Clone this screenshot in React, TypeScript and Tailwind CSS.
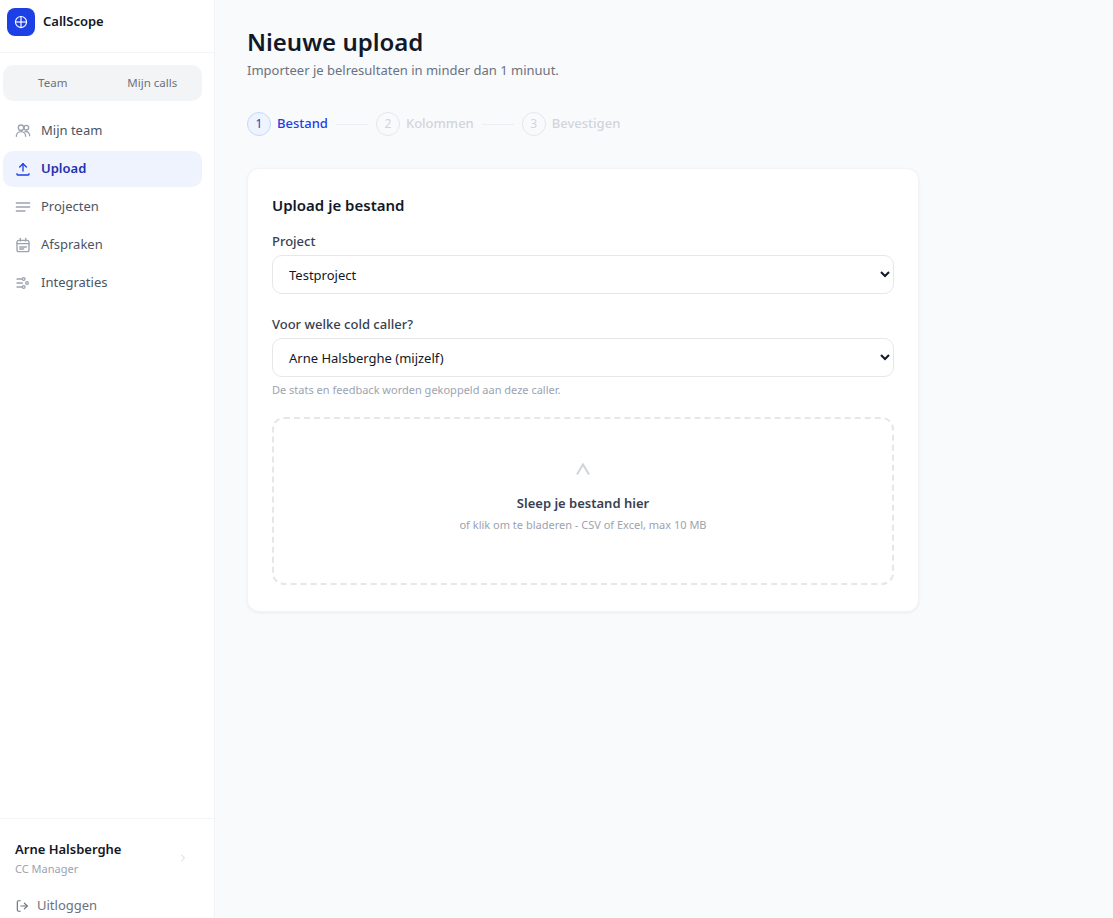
import React from "react";

const Icon = ({ children, className = "" }: { children: React.ReactNode; className?: string }) => (
  <svg viewBox="0 0 24 24" fill="none" stroke="currentColor" strokeWidth="2" strokeLinecap="round" strokeLinejoin="round" className={`w-4 h-4 shrink-0 ${className}`}>
    {children}
  </svg>
);

const nav = [
  { label: "Mijn team", icon: <><circle cx="9" cy="7" r="4" /><circle cx="17" cy="7" r="3.5" /><path d="M2 20c0-4 3-7 7-7s7 3 7 7" /><path d="M15 13c4-1 7 2 7 6" /></> },
  { label: "Upload", active: true, icon: <><path d="M12 15V4" /><path d="M7 9l5-5 5 5" /><path d="M3 19v1a1 1 0 0 0 1 1h16a1 1 0 0 0 1-1v-1" /></> },
  { label: "Projecten", icon: <><path d="M2 6h20" /><path d="M2 12h20" /><path d="M2 18h13" /></> },
  { label: "Afspraken", icon: <><rect x="3" y="5" width="18" height="17" rx="3" /><path d="M8 2v4" /><path d="M16 2v4" /><path d="M3 10h18" /><path d="M7 15h10" /><path d="M7 18h6" /></> },
  { label: "Integraties", icon: <><path d="M3 6h8" /><path d="M3 12h8" /><path d="M3 18h8" /><circle cx="13" cy="6" r="2" /><circle cx="18" cy="12" r="2" /><circle cx="13" cy="18" r="2" /></> },
];

const steps = [
  { n: 1, label: "Bestand", active: true },
  { n: 2, label: "Kolommen" },
  { n: 3, label: "Bevestigen" },
];

export default function App() {
  return (
    <div className="flex h-[918px] overflow-hidden bg-[#f9fafc] font-['Noto_Sans',sans-serif] text-[#111827]">
      <aside className="w-[215px] shrink-0 bg-white border-r border-[#f3f4f6] flex flex-col">
        <div className="h-[53px] shrink-0 border-b border-[#f3f4f6] flex items-center gap-2 pl-[7px] pb-[9px]">
          <div className="w-7 h-7 rounded-lg bg-[#1d3fe6] flex items-center justify-center text-white">
            <svg viewBox="0 0 24 24" fill="none" stroke="currentColor" strokeWidth="2" className="w-3.5 h-3.5">
              <circle cx="12" cy="12" r="9.5" />
              <path d="M2.5 12h19" />
              <path d="M12 2.5v19" />
            </svg>
          </div>
          <span className="text-[13px] font-semibold">CallScope</span>
        </div>
        <div className="ml-[3px] mr-3 mt-3 h-9 rounded-[10px] bg-[#f3f4f6] grid grid-cols-2 text-[11.5px] text-[#6b7280] items-center text-center shrink-0">
          <span>Team</span>
          <span>Mijn calls</span>
        </div>
        <nav className="mt-3 ml-[3px] mr-3 flex flex-col gap-0.5">
          {nav.map((item) => (
            <div
              key={item.label}
              className={`h-9 rounded-[10px] flex items-center gap-[10px] pl-3 text-[13px] ${item.active ? "bg-[#eef3fe] text-[#1e2fb0] font-semibold" : "text-[#4b5563]"}`}
            >
              <Icon className={item.active ? "text-[#1d3fe6]" : "text-[#9ca3af]"}>{item.icon}</Icon>
              <span>{item.label}</span>
            </div>
          ))}
        </nav>
        <div className="mt-auto border-t border-[#f3f4f6] h-[100px] shrink-0 flex flex-col">
          <div className="flex items-center justify-between pl-[15px] pr-[25px] pt-[20px]">
            <div>
              <div className="text-[13px] font-semibold leading-[20px]">Arne Halsberghe</div>
              <div className="text-[11px] leading-[16px] mt-[2px] text-[#9ca3af]">CC Manager</div>
            </div>
            <svg viewBox="0 0 24 24" fill="none" stroke="#d1d5db" strokeWidth="2" strokeLinecap="round" strokeLinejoin="round" className="w-3 h-3"><path d="M9 6l6 6-6 6" /></svg>
          </div>
          <div className="flex items-center gap-2 pl-[15px] mt-[19px] text-[13px] text-[#6b7280]">
            <svg viewBox="0 0 24 24" fill="none" stroke="currentColor" strokeWidth="2" strokeLinecap="round" strokeLinejoin="round" className="w-3.5 h-3.5"><path d="M9 21H6a2 2 0 0 1-2-2V5a2 2 0 0 1 2-2h3" /><path d="M16 17l5-5-5-5" /><path d="M21 12H10" /></svg>
            <span>Uitloggen</span>
          </div>
        </div>
      </aside>
      <main className="flex-1 pl-8 pt-[26px]">
        <h1 className="text-2xl font-semibold leading-8">Nieuwe upload</h1>
        <p className="text-[13px] leading-5 mt-0.5 text-[#6b7280]">Importeer je belresultaten in minder dan 1 minuut.</p>
        <div className="flex items-center mt-[32px] h-6">
          {steps.map((s, i) => (
            <React.Fragment key={s.n}>
              {i > 0 && <div className="w-8 h-px mx-2 bg-[#eceef2]" />}
              <div className="flex items-center gap-[6px]">
                <div className={`w-6 h-6 rounded-full border-[1.5px] flex items-center justify-center text-xs ${s.active ? "bg-[#eef3fe] border-[#bfdbfe] text-[#1e40af]" : "border-[#e5e7eb] text-[#d1d5db]"}`}>{s.n}</div>
                <span className={`text-[13px] font-medium ${s.active ? "text-[#1d3fe6]" : "text-[#d1d5db]"}`}>{s.label}</span>
              </div>
            </React.Fragment>
          ))}
        </div>
        <section className="mt-8 w-[672px] h-[444px] rounded-xl bg-white shadow-[0_1px_3px_rgba(0,0,0,0.06)] border border-[#f3f4f6] px-6 pt-[26px]">
          <h2 className="text-[15px] font-semibold leading-5">Upload je bestand</h2>
          <label className="block mt-[17px] text-[13px] font-medium leading-[18px] text-[#374151]">Project</label>
          <select className="mt-[5px] block w-full h-[39px] rounded-[10px] border border-[#e5e7eb] bg-white pl-3 pr-1 text-[13px] text-[#111827]">
            <option>Testproject</option>
          </select>
          <label className="block mt-[21px] text-[13px] font-medium leading-[18px] text-[#374151]">Voor welke cold caller?</label>
          <select className="mt-[5px] block w-full h-[39px] rounded-[10px] border border-[#e5e7eb] bg-white pl-3 pr-1 text-[13px] text-[#111827]">
            <option>Arne Halsberghe (mijzelf)</option>
          </select>
          <p className="text-[11px] leading-4 mt-[5px] text-[#9ca3af]">De stats en feedback worden gekoppeld aan deze caller.</p>
          <div className="mt-[19px] h-[168px] rounded-xl border-2 border-dashed border-[#e5e7eb] flex flex-col items-center pt-[44px]">
            <svg viewBox="0 0 14 12" fill="none" stroke="#d1d5db" strokeWidth="2" className="w-3.5 h-3"><path d="M1 11.5 L7 1.5 L13 11.5" /></svg>
            <div className="mt-[18px] text-[13px] font-semibold leading-5 text-[#374151]">Sleep je bestand hier</div>
            <div className="mt-1 text-[11px] leading-4 text-[#9ca3af]">of klik om te bladeren - CSV of Excel, max 10 MB</div>
          </div>
        </section>
      </main>
    </div>
  );
}
